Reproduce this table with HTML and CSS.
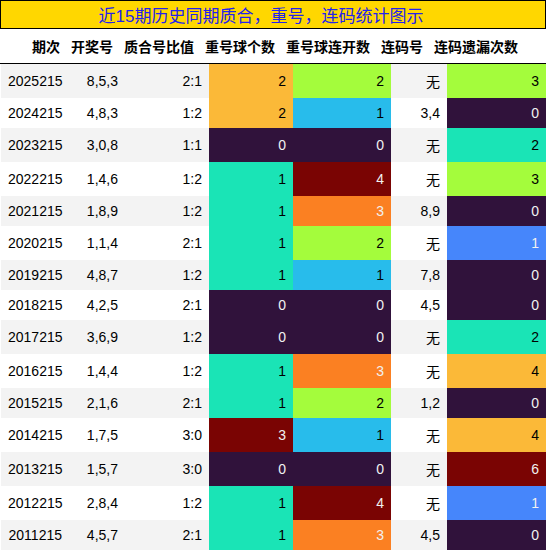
FILE: index.html
```html
<!DOCTYPE html>
<html lang="zh">
  <head>
    <meta charset="UTF-8" />
    <meta name="viewport" content="width=device-width, initial-scale=1.0" />
    <title>质合重号连码统计</title>
    <link rel="stylesheet" href="styles.css">
  </head>
  <body>
    <div class="title">近15期历史同期质合，重号，连码统计图示</div>

    <div class="head">
      <span>期次</span>
      <span>开奖号</span>
      <span>质合号比值</span>
      <span>重号球个数</span>
      <span>重号球连开数</span>
      <span>连码号</span>
      <span>连码遗漏次数</span>
    </div>

    <table class="stats">
      <colgroup>
        <col class="w-issue" />
        <col class="w-draw" />
        <col class="w-ratio" />
        <col class="w-repeat" />
        <col class="w-streak" />
        <col class="w-pair" />
        <col class="w-miss" />
      </colgroup>
      <tr>
        <td>2025215</td><td>8,5,3</td><td>2:1</td>
        <td class="amber">2</td><td class="lime">2</td><td>无</td><td class="lime">3</td>
      </tr>
      <tr>
        <td>2024215</td><td>4,8,3</td><td>1:2</td>
        <td class="amber">2</td><td class="cyan">1</td><td>3,4</td><td class="dark">0</td>
      </tr>
      <tr>
        <td>2023215</td><td>3,0,8</td><td>1:1</td>
        <td class="dark">0</td><td class="dark">0</td><td>无</td><td class="teal">2</td>
      </tr>
      <tr>
        <td>2022215</td><td>1,4,6</td><td>1:2</td>
        <td class="teal">1</td><td class="red">4</td><td>无</td><td class="lime">3</td>
      </tr>
      <tr>
        <td>2021215</td><td>1,8,9</td><td>1:2</td>
        <td class="teal">1</td><td class="orange">3</td><td>8,9</td><td class="dark">0</td>
      </tr>
      <tr>
        <td>2020215</td><td>1,1,4</td><td>2:1</td>
        <td class="teal">1</td><td class="lime">2</td><td>无</td><td class="blue">1</td>
      </tr>
      <tr>
        <td>2019215</td><td>4,8,7</td><td>1:2</td>
        <td class="teal">1</td><td class="cyan">1</td><td>7,8</td><td class="dark">0</td>
      </tr>
      <tr>
        <td>2018215</td><td>4,2,5</td><td>2:1</td>
        <td class="dark">0</td><td class="dark">0</td><td>4,5</td><td class="dark">0</td>
      </tr>
      <tr>
        <td>2017215</td><td>3,6,9</td><td>1:2</td>
        <td class="dark">0</td><td class="dark">0</td><td>无</td><td class="teal">2</td>
      </tr>
      <tr>
        <td>2016215</td><td>1,4,4</td><td>1:2</td>
        <td class="teal">1</td><td class="orange">3</td><td>无</td><td class="amber">4</td>
      </tr>
      <tr>
        <td>2015215</td><td>2,1,6</td><td>2:1</td>
        <td class="teal">1</td><td class="lime">2</td><td>1,2</td><td class="dark">0</td>
      </tr>
      <tr>
        <td>2014215</td><td>1,7,5</td><td>3:0</td>
        <td class="red">3</td><td class="cyan">1</td><td>无</td><td class="amber">4</td>
      </tr>
      <tr>
        <td>2013215</td><td>1,5,7</td><td>3:0</td>
        <td class="dark">0</td><td class="dark">0</td><td>无</td><td class="red">6</td>
      </tr>
      <tr>
        <td>2012215</td><td>2,8,4</td><td>1:2</td>
        <td class="teal">1</td><td class="red">4</td><td>无</td><td class="blue">1</td>
      </tr>
      <tr>
        <td>2011215</td><td>4,5,7</td><td>2:1</td>
        <td class="teal">1</td><td class="orange">3</td><td>4,5</td><td class="dark">0</td>
      </tr>
    </table>
  </body>
</html>
```

FILE: styles.css
```css
* {
  margin: 0;
  padding: 0;
  box-sizing: border-box;
}

body {
  background-color: white;
  font-family: "Liberation Sans", "Noto Sans CJK SC", sans-serif;
  font-size: 14px;
  color: #000;
}

.title {
  background-color: #ffd700;
  border: 1px solid #000;
  color: #2222ee;
  font-size: 17px;
  text-align: center;
  padding: 1px 24px 1px 0;
}

.head {
  display: flex;
  gap: 11px;
  padding: 7px 0 7px 32px;
  border-bottom: 1px solid #000;
  font-weight: bold;
}

.stats {
  margin-left: 1px;
  width: 545px;
  table-layout: fixed;
  border-collapse: collapse;
}

.w-issue { width: 68px; }
.w-draw { width: 56px; }
.w-ratio { width: 84px; }
.w-repeat { width: 84px; }
.w-streak { width: 98px; }
.w-pair { width: 56px; }
.w-miss { width: 99px; }

td {
  text-align: right;
  padding: 7px;
  white-space: nowrap;
}

tr:nth-child(odd) {
  background-color: #f3f3f3;
}

/* gradient cells */
.dark {
  background-color: #30123b;
  color: #f1f1f1;
}

.blue {
  background-color: #4686fb;
  color: #f1f1f1;
}

.cyan {
  background-color: #28bceb;
}

.teal {
  background-color: #1ae4b6;
}

.lime {
  background-color: #a4fc3c;
}

.amber {
  background-color: #fbb938;
}

.orange {
  background-color: #fb8022;
  color: #f1f1f1;
}

.red {
  background-color: #7a0403;
  color: #f1f1f1;
}
```
